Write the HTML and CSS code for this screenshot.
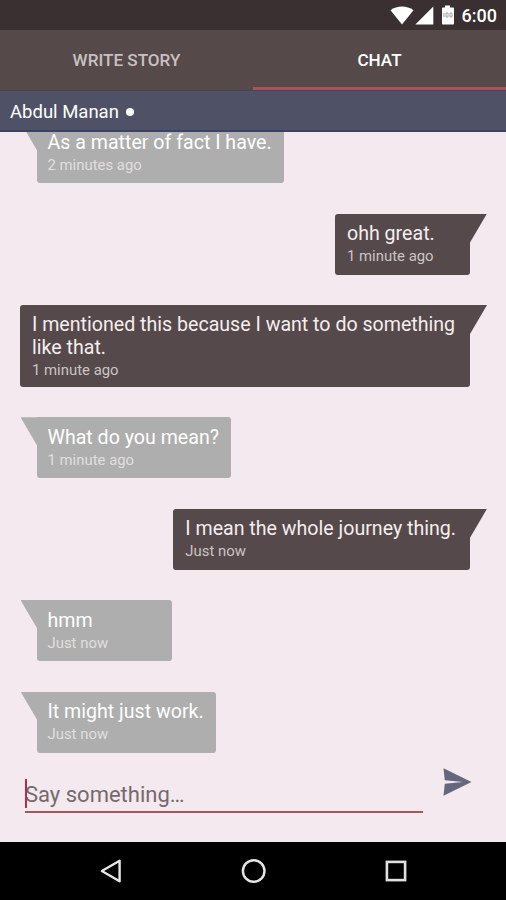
FILE: index.html
```html
<!DOCTYPE html>
<html lang="en">

<head>
    <meta charset="UTF-8">
    <meta name="viewport" content="width=device-width, initial-scale=1.0">
    <title>Chat</title>
    <link rel="stylesheet" href="styles.css">
</head>

<body>
    <div class="status">
        <svg class="wifi" width="24" height="20" viewBox="0 0 24 20">
            <path d="M0.5 5.2 C7 0.2 17 0.2 23.5 5.2 L12 19.5Z" fill="#fff"/>
        </svg>
        <svg class="signal" width="19" height="19" viewBox="0 0 19 19">
            <path d="M18.3 0.5V18.5H0.3Z" fill="#fff"/>
        </svg>
        <svg class="battery" width="14" height="20" viewBox="0 0 14 20">
            <path d="M4 0.5h5v2h3.2q.8 0 .8.8v15.4q0 .8-.8.8H1.8q-.8 0-.8-.8V3.3q0-.8.8-.8H4z" fill="#fff"/>
            <path d="M3 8v4M5 8h2v4H5zM9 8h2v4H9z" fill="none" stroke="#a9a5a5" stroke-width="1"/>
        </svg>
        <span class="clock">6:00</span>
    </div>
    <div class="tabs">
        <div class="tab">WRITE STORY</div>
        <div class="tab active">CHAT</div>
    </div>
    <div class="contact">Abdul Manan <span class="online"></span></div>

    <div class="messages">
        <div class="message received">
            <div class="text">As a matter of fact I have.</div>
            <div class="time">2 minutes ago</div>
        </div>
        <div class="message sent">
            <div class="text">ohh great.</div>
            <div class="time">1 minute ago</div>
        </div>
        <div class="message sent">
            <div class="text">I mentioned this because I want to do something like that.</div>
            <div class="time">1 minute ago</div>
        </div>
        <div class="message received">
            <div class="text">What do you mean?</div>
            <div class="time">1 minute ago</div>
        </div>
        <div class="message sent">
            <div class="text">I mean the whole journey thing.</div>
            <div class="time">Just now</div>
        </div>
        <div class="message received">
            <div class="text">hmm</div>
            <div class="time">Just now</div>
        </div>
        <div class="message received">
            <div class="text">It might just work.</div>
            <div class="time">Just now</div>
        </div>
    </div>

    <div class="compose">
        <div class="field"><span class="caret"></span>Say something…</div>
        <svg class="send" width="29" height="28" viewBox="0 0 29 28">
            <path d="M0.5 0.3L28.5 14L0.5 27.7L1.8 15.7L20 14L1.8 12.3Z" fill="#64677d"/>
        </svg>
    </div>

    <div class="navbar">
        <svg width="24" height="26" viewBox="0 0 24 26">
            <path d="M20.6 2.7V23.3L2.9 13Z" fill="none" stroke="#e6e6e6" stroke-width="2.4" stroke-linejoin="round"/>
        </svg>
        <svg width="26" height="26" viewBox="0 0 26 26">
            <circle cx="12.7" cy="13" r="10.8" fill="none" stroke="#e6e6e6" stroke-width="2.4"/>
        </svg>
        <svg width="24" height="24" viewBox="0 0 24 24">
            <rect x="2.9" y="2.9" width="18.2" height="18.2" fill="none" stroke="#e0e0e0" stroke-width="2.6"/>
        </svg>
    </div>
</body>

</html>
```

FILE: styles.css
```css
body {
    margin: 0;
    height: 900px;
    display: flex;
    flex-direction: column;
    overflow: hidden;
    font-family: Roboto, sans-serif;
    color: #fff;
    background-color: #f3e9ee;
}

.status {
    height: 30px;
    box-sizing: border-box;
    padding: 0 9px 0 0;
    display: flex;
    flex: none;
    align-items: center;
    justify-content: flex-end;
    background-color: #3a3031;
}

.signal {
    margin-left: 1px;
}

.battery {
    margin-left: 7px;
}

.clock {
    margin: 2px 0 0 7px;
    font-size: 18px;
    font-weight: 500;
    line-height: 28px;
}

.tabs {
    height: 60px;
    display: flex;
    flex: none;
    background-color: #56494a;
}

.tab {
    flex: 1;
    box-sizing: border-box;
    border-bottom: 3px solid transparent;
    padding-top: 2px;
    font-size: 17.1px;
    font-weight: 500;
    line-height: 57px;
    text-align: center;
    color: #c9c0c1;
}

.tab.active {
    color: #fff;
    border-bottom-color: #a85458;
}

.contact {
    height: 42px;
    box-sizing: border-box;
    padding: 2px 0 0 10px;
    display: flex;
    flex: none;
    align-items: center;
    font-size: 18.5px;
    background-color: #4f5267;
    border-top: 1px solid #454557;
    border-bottom: 2px solid #3d4264;
}

.online {
    width: 8px;
    height: 8px;
    margin: 1px 0 0 7px;
    border-radius: 50%;
    background-color: #fff;
}

.messages {
    height: 620.5px;
    flex: none;
    box-sizing: border-box;
    padding: 0 36px 0 37px;
    display: flex;
    flex-direction: column;
    justify-content: flex-end;
    gap: 30.4px;
    overflow: hidden;
}

.message {
    position: relative;
    flex: none;
    box-sizing: border-box;
    min-width: 135px;
    min-height: 61px;
    border-radius: 3px;
}

.received {
    align-self: flex-start;
    padding: 8.4px 12px 7.6px 10.5px;
    border-top-left-radius: 0;
    background-color: #aeaeae;
}

.sent {
    align-self: flex-end;
    padding: 8.4px 14px 7.6px 12px;
    border-top-right-radius: 0;
    background-color: #56494b;
    max-width: 450px;
    margin-left: -17px;
}

.message::before {
    content: '';
    position: absolute;
    top: 0;
    width: 17px;
    height: 29px;
    background-color: inherit;
}

.received::before {
    left: -16.5px;
    clip-path: polygon(0 0, 100% 0, 100% 100%);
}

.sent::before {
    right: -17px;
    clip-path: polygon(0 0, 100% 0, 0 100%);
}

.text {
    font-size: 19.6px;
    line-height: 23px;
}

.time {
    padding-top: 2px;
    font-size: 14.9px;
    line-height: 18px;
    color: #e0dfdf;
}

.sent .text {
    color: #f5eeef;
}

.sent .time {
    color: #cbc4c5;
}

.compose {
    flex: 1;
    display: flex;
    align-items: flex-start;
    padding: 15px 34px 0 25px;
}

.field {
    position: relative;
    width: 398px;
    box-sizing: border-box;
    height: 45.5px;
    padding-top: 12px;
    border-bottom: 2px solid #a8555b;
    font-size: 22px;
    line-height: 30px;
    color: #75696d;
}

.caret {
    position: absolute;
    left: 0;
    top: 11px;
    width: 2px;
    height: 29px;
    background-color: #b0304a;
}

.send {
    margin-left: 20px;
}

.navbar {
    height: 58px;
    box-sizing: border-box;
    flex: none;
    padding: 0 98px 0 99px;
    display: flex;
    align-items: center;
    justify-content: space-between;
    background-color: #000;
}
```
